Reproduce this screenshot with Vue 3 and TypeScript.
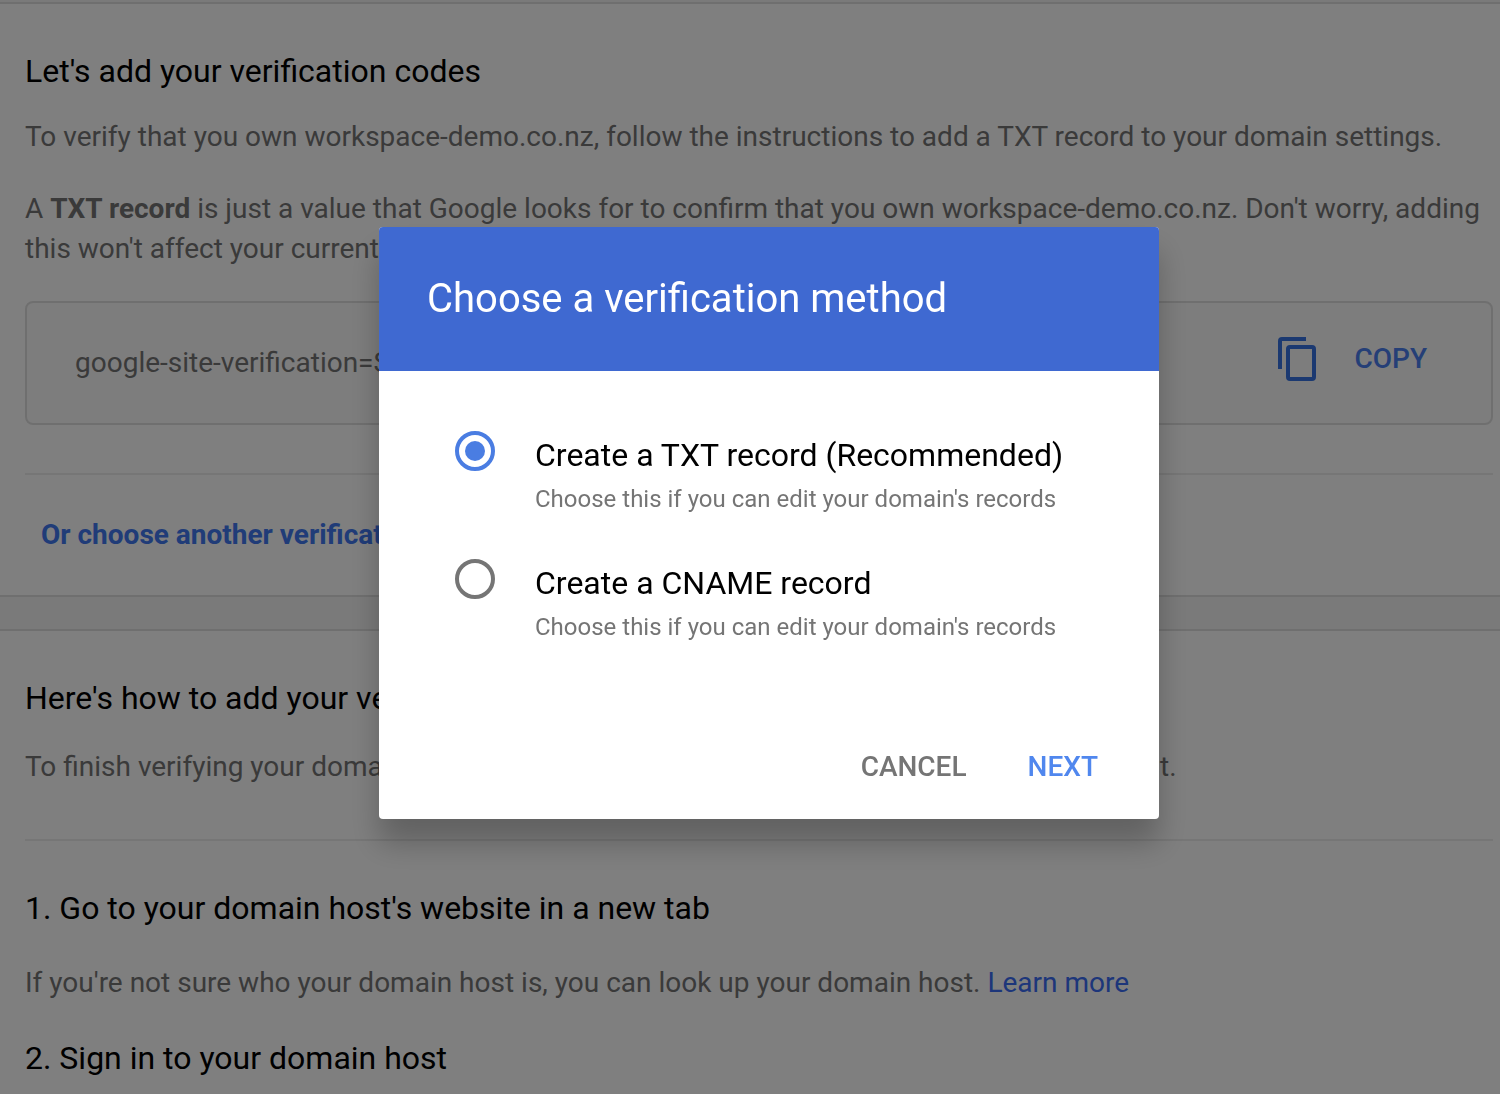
<script setup lang="ts">
import { ref } from 'vue'

interface Method {
  id: string
  title: string
  hint: string
}

const methods: Method[] = [
  { id: 'txt', title: 'Create a TXT record (Recommended)', hint: "Choose this if you can edit your domain's records" },
  { id: 'cname', title: 'Create a CNAME record', hint: "Choose this if you can edit your domain's records" },
]

const selected = ref('txt')
</script>

<template>
  <div class="page">
    <main class="content">
      <section class="panel codes">
        <h2>Let's add your verification codes</h2>
        <p>To verify that you own workspace-demo.co.nz, follow the instructions to add a TXT record to your domain settings.</p>
        <p>A <strong>TXT record</strong> is just a value that Google looks for to confirm that you own workspace-demo.co.nz. Don't worry, adding this won't affect your current settings.</p>
        <div class="code-box">
          <span class="code">google-site-verification=S</span>
          <button type="button" class="copy">
            <svg viewBox="0 0 38 44" aria-hidden="true">
              <path d="M2 32V4a2 2 0 0 1 2-2h24" />
              <rect x="10" y="10" width="26" height="32" rx="2" />
            </svg>
            COPY
          </button>
        </div>
        <div class="other">
          <a href="#">Or choose another verification method</a>
        </div>
      </section>

      <section class="panel steps">
        <h2>Here's how to add your verification code</h2>
        <p class="intro">To finish verifying your domain, you will need to set the verification code at your domain host.</p>
        <hr />
        <h2>1. Go to your domain host's website in a new tab</h2>
        <p>If you're not sure who your domain host is, you can look up your domain host. <a href="#">Learn more</a></p>
        <h2>2. Sign in to your domain host</h2>
      </section>
    </main>

    <div class="overlay">
      <form class="dialog" role="dialog" aria-modal="true" aria-labelledby="dialog-title" @submit.prevent>
        <header>
          <h1 id="dialog-title">Choose a verification method</h1>
        </header>
        <div class="options">
          <div v-for="m in methods" :key="m.id" class="option">
            <input :id="m.id" v-model="selected" type="radio" name="method" :value="m.id" />
            <label :for="m.id">
              <span class="title">{{ m.title }}</span>
              <span class="hint">{{ m.hint }}</span>
            </label>
          </div>
        </div>
        <footer>
          <button type="button" class="cancel">CANCEL</button>
          <button type="submit" class="next">NEXT</button>
        </footer>
      </form>
    </div>
  </div>
</template>

<style>
body {
  margin: 0;
  overflow: hidden;
}
</style>

<style scoped>
.page {
  box-sizing: border-box;
  min-height: 100vh;
  padding-top: 2px;
  background: #f4f4f4;
  color: #757575;
  font-family: Roboto, "Liberation Sans", sans-serif;
  font-size: 28px;
  line-height: 40px;
}
.content {
  display: flex;
  flex-direction: column;
  gap: 32px;
}
.panel {
  padding: 47px 7px 16px 25px;
  border-top: 2px solid #dfdfdf;
  background: #fff;
}
.codes {
  padding-bottom: 0;
  border-bottom: 2px solid #dfdfdf;
}
h1,
h2,
p {
  margin: 0;
  font-weight: 400;
}
h2 {
  color: #000;
  font-size: 32px;
}
a {
  color: #4178f0;
  text-decoration: none;
}
.codes h2 {
  margin-bottom: 26px;
}
.codes p {
  margin-bottom: 32px;
}
.code-box {
  display: flex;
  align-items: center;
  justify-content: space-between;
  box-sizing: border-box;
  height: 124px;
  padding: 0 48px;
  border: 2px solid #dfdfdf;
  border-radius: 8px;
  background: #fafafa;
}
button {
  padding: 0 16px;
  border: 0;
  background: none;
  font: inherit;
  font-weight: 500;
}
.copy {
  display: flex;
  align-items: center;
  gap: 38px;
  padding: 0 16px 8px;
  color: #4a7eee;
}
.copy svg {
  width: 38px;
  height: 44px;
  fill: none;
  stroke: #3673e2;
  stroke-width: 4;
}
.other {
  margin-top: 48px;
  padding: 40px 16px;
  border-top: 2px solid #ececec;
  font-weight: 700;
}
.steps h2 {
  margin-bottom: 35px;
}
.steps h2:first-child {
  margin-bottom: 29px;
}
.steps p {
  margin-bottom: 35px;
}
.steps a {
  color: #3a6cf5;
}
.steps .intro {
  margin-bottom: 52px;
}
hr {
  margin: 0 0 47px;
  border: 0;
  border-top: 2px solid #ececec;
}
.overlay {
  position: fixed;
  inset: 0;
  display: flex;
  align-items: center;
  justify-content: center;
  padding: 0 0 48px 38px;
  background: rgba(0, 0, 0, 0.5);
}
.dialog {
  width: 780px;
  overflow: hidden;
  border-radius: 4px;
  background: #fff;
  box-shadow: 0 24px 30px rgba(0, 0, 0, 0.24);
}
header {
  padding: 48px;
  background: #3f69d1;
}
h1 {
  color: #fff;
  font-size: 40px;
  line-height: 48px;
}
.options {
  display: flex;
  flex-direction: column;
  gap: 44px;
  padding: 60px 76px 0;
}
.option {
  display: flex;
  align-items: flex-start;
  gap: 40px;
}
input {
  display: grid;
  place-content: center;
  flex: none;
  box-sizing: border-box;
  width: 40px;
  height: 40px;
  margin: 0;
  appearance: none;
  border: 4px solid #757575;
  border-radius: 50%;
}
input:checked {
  border-color: #4a7de2;
}
input:checked::before {
  content: "";
  width: 20px;
  height: 20px;
  border-radius: 50%;
  background: #4a7de2;
}
label {
  display: flex;
  flex-direction: column;
  gap: 8px;
  padding-top: 4px;
}
.title {
  color: #000;
  font-size: 32px;
}
.hint {
  font-size: 24px;
  line-height: 32px;
}
footer {
  display: flex;
  justify-content: flex-end;
  gap: 29px;
  padding: 104px 45px 32px;
}
.cancel {
  color: #757575;
}
.next {
  color: #5087ee;
}
</style>
